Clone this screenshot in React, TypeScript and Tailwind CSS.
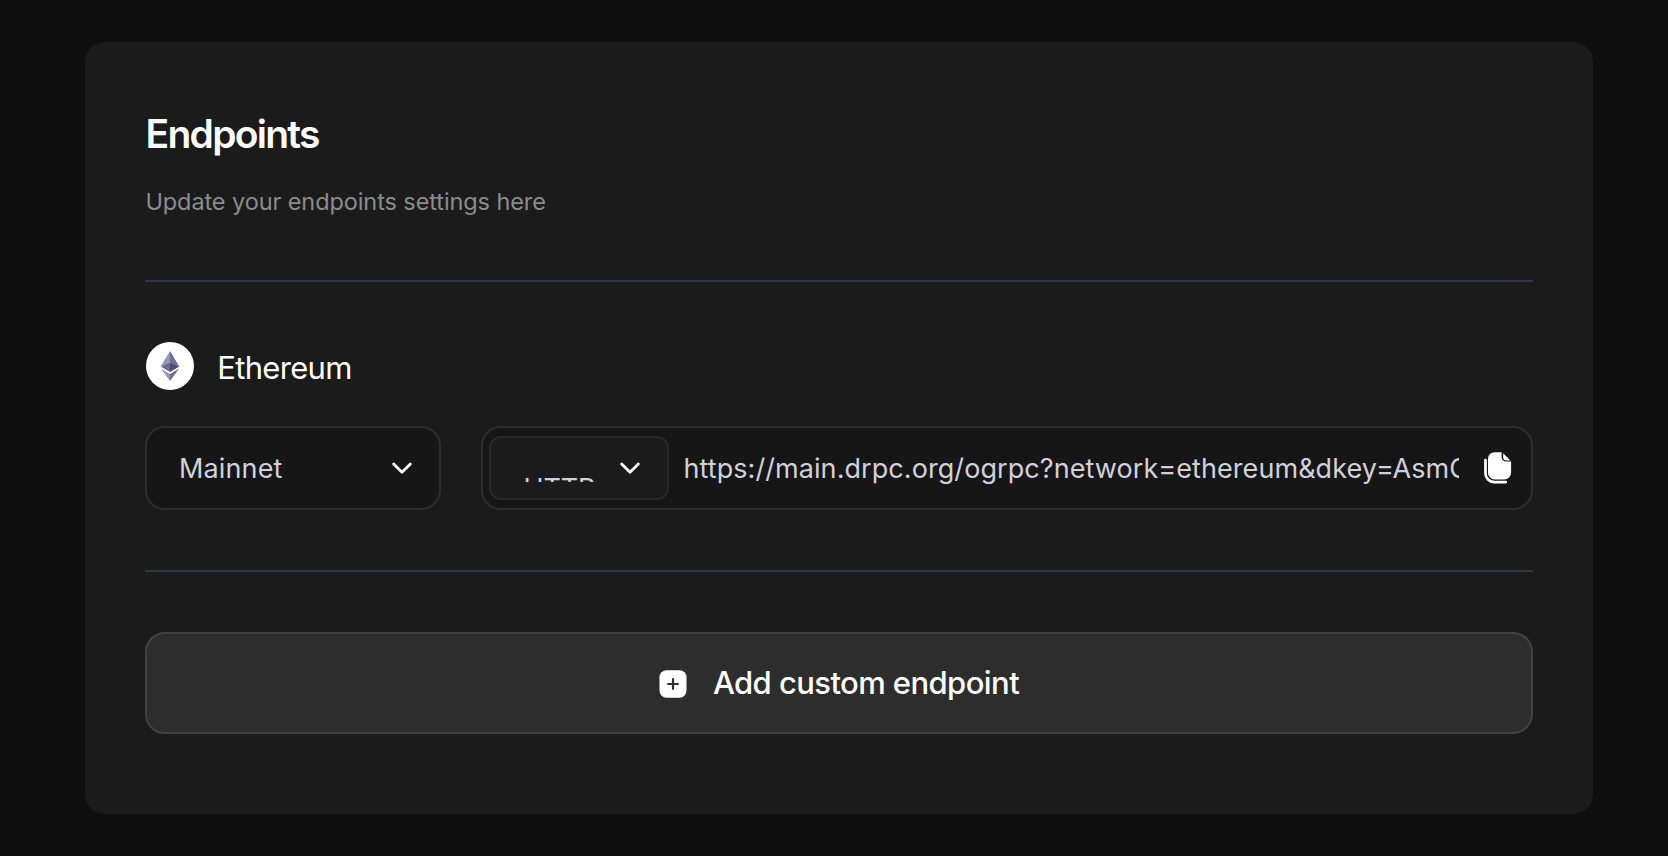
import React from "react";

function EthereumLogo() {
  return (
    <svg width="48" height="48" viewBox="0 0 48 48" className="shrink-0" aria-hidden="true">
      <circle cx="24" cy="24" r="24" fill="#ffffff" />
      <path d="M24 9 14.7 24.4 24 20.3z" fill="#9496b5" />
      <path d="M24 9v11.3l9.3 4.1z" fill="#6d6f97" />
      <path d="M14.7 24.4 24 20.3v9.7z" fill="#686a92" />
      <path d="M33.3 24.4 24 20.3v9.7z" fill="#4c4e78" />
      <path d="M14.7 26.5 24 32v7z" fill="#9496b5" />
      <path d="M33.3 26.5 24 32v7z" fill="#6d6f97" />
    </svg>
  );
}

function ChevronIcon() {
  return (
    <svg width="20" height="12" viewBox="0 0 20 12" fill="none" className="shrink-0" aria-hidden="true">
      <path d="M1.7 2 10 10.2 18.3 2" stroke="#ffffff" strokeWidth="2.8" strokeLinecap="round" strokeLinejoin="round" />
    </svg>
  );
}

function CopyIcon() {
  return (
    <svg width="28" height="32" viewBox="0 0 28 32" className="shrink-0" aria-hidden="true">
      <path
        d="M10.5 .2H17.6V5.2a4.3 4.3 0 0 0 4.3 4.3H27.1V20.7a6.8 6.8 0 0 1-6.8 6.8H10.5a6.5 6.5 0 0 1-6.5-6.5V6.7A6.5 6.5 0 0 1 10.5 .2z"
        fill="#ffffff"
      />
      <path d="M19.2 1.2 26.4 8.4H22.2a3 3 0 0 1-3-3z" fill="#ffffff" />
      <path d="M1.5 8V21.4a8.7 8.7 0 0 0 8.7 8.7H21.8" fill="none" stroke="#ffffff" strokeWidth="2.7" strokeLinecap="round" />
    </svg>
  );
}

function AddIcon() {
  return (
    <svg width="28" height="28" viewBox="0 0 28 28" className="mt-[2px] shrink-0" aria-hidden="true">
      <rect x=".5" y=".3" width="27" height="27.4" rx="7" fill="#ffffff" />
      <path d="M14 9.2v9.6M9.2 14h9.6" stroke="#2d2d2d" strokeWidth="2.2" strokeLinecap="round" />
    </svg>
  );
}

function Divider() {
  return <div className="h-[2px] bg-[#35354a]" />;
}

export default function App() {
  return (
    <main className="h-[856px] w-[1668px] overflow-hidden bg-[#0f0f0f] pt-[42px] pl-[85px] font-['Inter',sans-serif]">
      <section className="flex h-[772px] w-[1508px] flex-col rounded-[20px] bg-[#1b1b1b] px-[60px] pt-[68px]">
        <h1 className="pl-[0.6px] text-[39px] leading-[48px] font-semibold tracking-[-1.75px] text-[#fafafa]">Endpoints</h1>
        <p className="mt-7 mb-[62px] pl-[0.4px] text-[23.5px] leading-8 tracking-[-0.09px] text-[#8c8c8c]">
          Update your endpoints settings here
        </p>
        <Divider />

        <div className="mt-[60px] ml-px flex h-12 gap-[23.3px]">
          <EthereumLogo />
          <h2 className="text-[31px] leading-[52px] tracking-[-0.7px] text-white">Ethereum</h2>
        </div>

        <div className="mt-9 mb-[60px] flex h-[84px] justify-between text-[27px] text-[#d1d1db]">
          <button className="flex w-[296px] items-center justify-between rounded-[20px] border-2 border-[#2d2d2d] bg-[#161616] pr-[27px] pl-8">
            <span className="pt-[2px] leading-8 tracking-[0.13px]">Mainnet</span>
            <ChevronIcon />
          </button>
          <div className="flex w-[1052px] items-center rounded-[20px] border-2 border-[#2d2d2d] bg-[#161616] pr-5 pl-[6px]">
            <button className="flex h-16 w-[180px] shrink-0 items-center justify-between rounded-xl border-2 border-[#292929] bg-[#1b1b1b] pr-[27px] pl-[32.5px]">
              <span className="h-7 overflow-hidden leading-[70px] tracking-[-0.1px]">HTTP</span>
              <ChevronIcon />
            </button>
            <div className="ml-[14px] w-[776px] shrink-0 overflow-hidden pt-[2px] pl-[0.5px] leading-9 tracking-[0.07px] whitespace-nowrap">
              https://main.drpc.org/ogrpc?network=ethereum&amp;dkey=AsmC
            </div>
            <button className="ml-[25px]" aria-label="Copy endpoint">
              <CopyIcon />
            </button>
          </div>
        </div>
        <Divider />

        <button className="mt-[60px] flex h-[102px] items-center justify-center gap-[26px] rounded-[20px] border-2 border-[#424242] bg-[#2d2d2d] text-white">
          <AddIcon />
          <span className="text-[31px] leading-10 font-medium tracking-[-0.58px]">Add custom endpoint</span>
        </button>
      </section>
    </main>
  );
}
